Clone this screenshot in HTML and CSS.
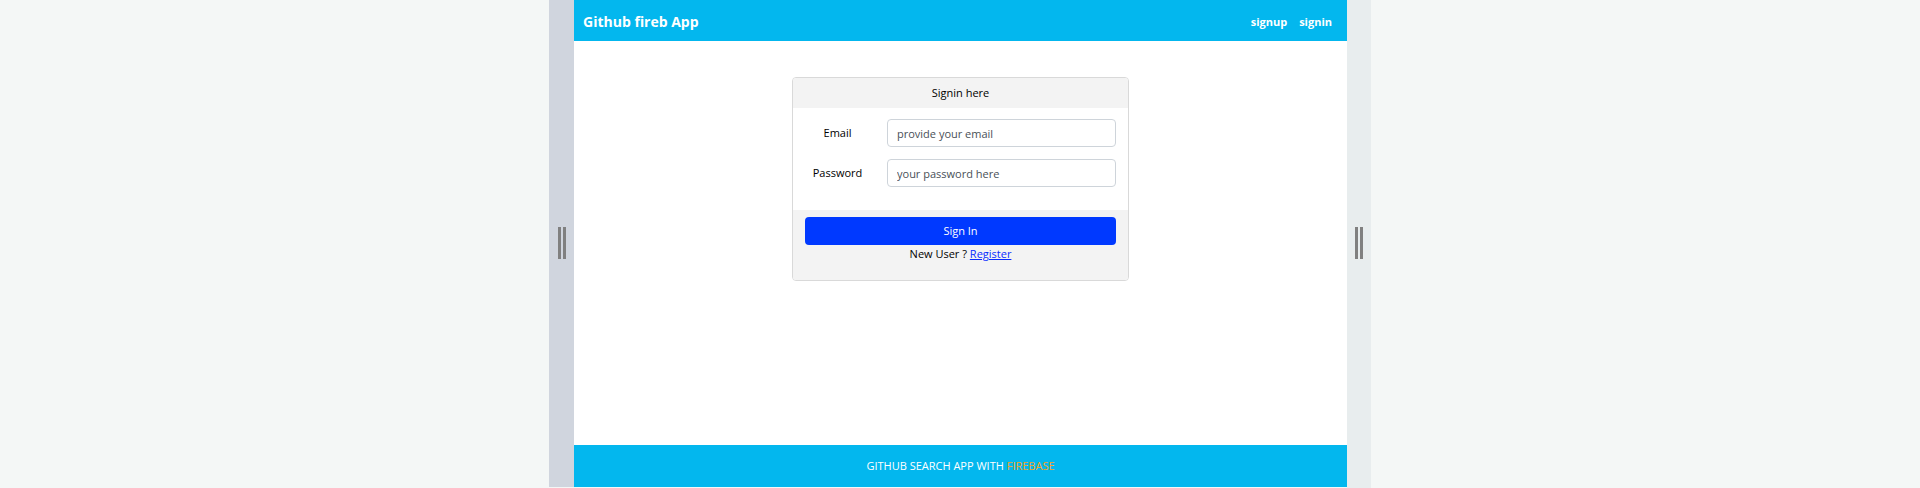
FILE: index.html
```
<!DOCTYPE html>
<html lang="en">
<head>
<meta charset="utf-8">
<title>Github fireb App</title>
<link rel="stylesheet" href="styles.css">
</head>
<body>
<div class="stage">
  <div class="handle handle-left"><span class="grip"></span></div>
  <div class="app">
    <header class="navbar">
      <a class="brand" href="#">Github fireb App</a>
      <nav class="links">
        <a href="#">signup</a>
        <a href="#">signin</a>
      </nav>
    </header>
    <main class="content">
      <form class="card">
        <h1 class="card-header">Signin here</h1>
        <div class="card-body">
          <div class="field">
            <label for="email">Email</label>
            <input id="email" type="email" placeholder="provide your email">
          </div>
          <div class="field">
            <label for="password">Password</label>
            <input id="password" type="password" placeholder="your password here">
          </div>
        </div>
        <div class="card-footer">
          <button class="submit" type="button">Sign In</button>
          <p class="register">New User ? <a href="#">Register</a></p>
        </div>
      </form>
    </main>
    <footer class="footer">GITHUB SEARCH APP WITH&nbsp;<span class="accent">FIREBASE</span></footer>
  </div>
  <div class="handle handle-right"><span class="grip"></span></div>
</div>
</body>
</html>
```
FILE: styles.css
```
* {
  box-sizing: border-box;
}

body {
  margin: 0;
  background: #f4f7f6;
  color: #000;
  font: 11px/18px "Open Sans", "Noto Sans", sans-serif;
}

.stage {
  display: flex;
  max-width: 822px;
  min-height: 100vh;
  margin: 0 auto;
}

.handle {
  display: flex;
  flex: none;
  align-items: center;
  justify-content: center;
  padding-bottom: 2px;
}

.handle-left {
  width: 25px;
  margin-bottom: 1px;
  background: #d0d5de;
}

.handle-right {
  width: 24px;
  background: #e8edee;
}

.grip {
  width: 8px;
  height: 32px;
  border: solid #808080;
  border-width: 0 3px;
}

.app {
  display: flex;
  flex: 1;
  flex-direction: column;
  margin-bottom: 1px;
  background: #fff;
}

.navbar {
  display: flex;
  align-items: center;
  justify-content: space-between;
  padding: 9px 15px 7px 9px;
  background: #03b7ee;
  color: #fff;
  font-weight: 700;
  line-height: 25px;
}

.navbar a {
  color: inherit;
  text-decoration: none;
}

.brand {
  font-size: 14px;
}

.links {
  display: flex;
  gap: 12px;
}

.content {
  flex: 1;
  padding: 36px 12px;
}

.card {
  max-width: 337px;
  margin: 0 auto;
  overflow: hidden;
  border: 1px solid #d9d9d9;
  border-radius: 4px;
  text-align: center;
}

.card-header {
  margin: 0;
  padding: 6px 12px;
  background: #f3f3f3;
  font: inherit;
}

.card-body {
  display: grid;
  gap: 12px;
  padding: 11px 12px 23px;
}

.field {
  display: grid;
  grid-template-columns: 65px 1fr;
  gap: 17px;
  align-items: center;
}

.field input {
  width: 100%;
  min-width: 0;
  height: 28px;
  padding: 0 9px;
  border: 1px solid #ced4da;
  border-radius: 4px;
  background: #fff;
  font: inherit;
}

.field input::placeholder {
  color: #495057;
  opacity: 1;
}

.card-footer {
  padding: 7px 12px 17px;
  background: #f3f3f3;
}

.submit {
  display: block;
  width: 100%;
  height: 28px;
  padding: 0;
  border: 0;
  border-radius: 4px;
  background: #0039ff;
  color: #fff;
  font: inherit;
}

.register {
  margin: 0;
}

.register a {
  color: #0a2cff;
}

.footer {
  display: flex;
  justify-content: center;
  padding: 12px;
  background: #03b7ee;
  color: #fff;
}

.accent {
  color: #f5a623;
}
```
